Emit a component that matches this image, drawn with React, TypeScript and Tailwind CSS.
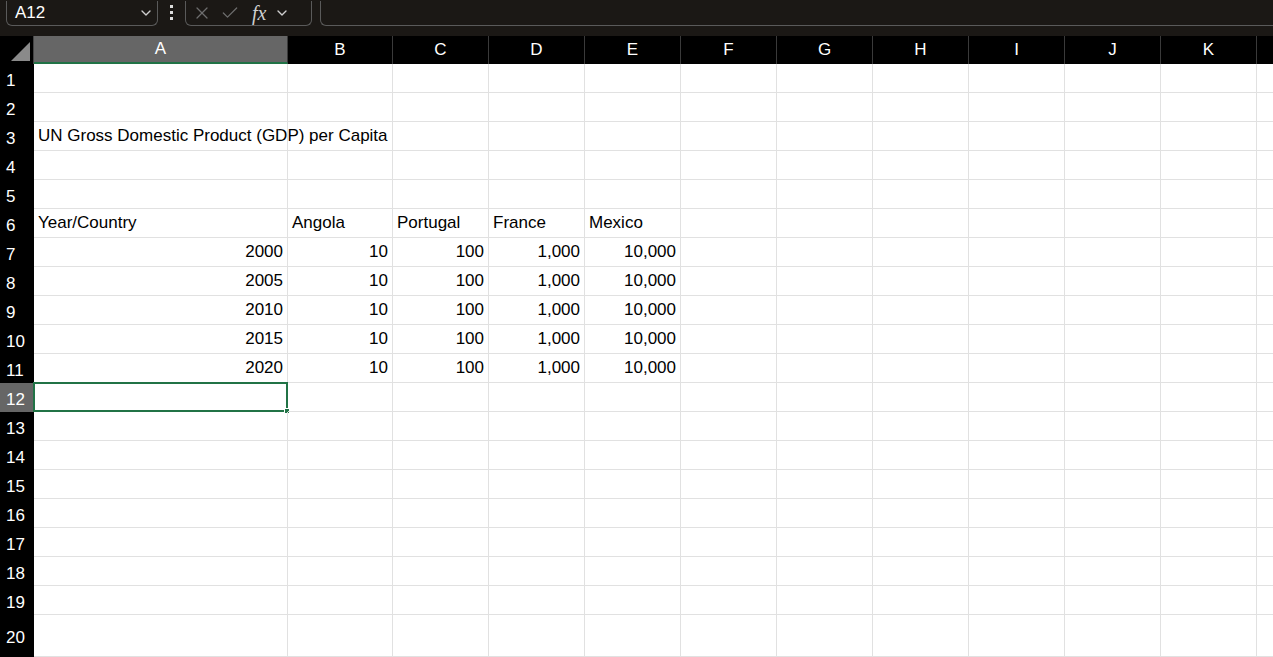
import { ChevronDown, X, Check } from "lucide-react";

const cols = [
  { l: "A", w: 254 },
  { l: "B", w: 105 },
  { l: "C", w: 96 },
  { l: "D", w: 96 },
  { l: "E", w: 96 },
  { l: "F", w: 96 },
  { l: "G", w: 96 },
  { l: "H", w: 96 },
  { l: "I", w: 96 },
  { l: "J", w: 96 },
  { l: "K", w: 96 },
  { l: "", w: 96 },
];

const data: Record<number, string[]> = {
  3: ["UN Gross Domestic Product (GDP) per Capita"],
  6: ["Year/Country", "Angola", "Portugal", "France", "Mexico"],
  7: ["2000", "10", "100", "1,000", "10,000"],
  8: ["2005", "10", "100", "1,000", "10,000"],
  9: ["2010", "10", "100", "1,000", "10,000"],
  10: ["2015", "10", "100", "1,000", "10,000"],
  11: ["2020", "10", "100", "1,000", "10,000"],
};

const App = () => {
  const rows = Array.from({ length: 20 }, (_, i) => i + 1);
  return (
    <div className="h-[657px] w-[1273px] overflow-hidden bg-white" style={{ fontFamily: '"Liberation Sans", Arial, sans-serif' }}>
      {/* formula bar */}
      <div className="flex h-[36px] items-start gap-0 bg-[#1b1815] pt-[1px] text-white">
        <div className="ml-[6px] flex h-[25px] w-[152px] items-center justify-between rounded-b-md border border-[#5a5a5a] border-t-0 pl-[8px] pr-[3px] text-[17px]">
          <span>A12</span>
          <ChevronDown className="h-4 w-4 text-[#cfcfcf]" />
        </div>
        <div className="mx-[12px] flex h-[22px] flex-col items-center justify-center gap-[3px]">
          <div className="h-[3px] w-[3px] bg-[#ddd]" />
          <div className="h-[3px] w-[3px] bg-[#ddd]" />
          <div className="h-[3px] w-[3px] bg-[#ddd]" />
        </div>
        <div className="flex h-[25px] w-[127px] items-center gap-[8px] rounded-b-md border border-[#5a5a5a] border-t-0 pl-[6px] text-[#6d6d6d]">
          <X className="h-5 w-5" strokeWidth={1.5} />
          <Check className="h-5 w-5" strokeWidth={1.5} />
          <span className="ml-[4px] text-[20px] italic text-[#cfcfcf]" style={{ fontFamily: '"Liberation Serif", serif' }}>fx</span>
          <ChevronDown className="h-4 w-4 text-[#cfcfcf]" />
        </div>
        <div className="ml-[8px] h-[25px] flex-1 rounded-bl-md border-b border-l border-[#5a5a5a]" />
      </div>
      {/* column header */}
      <div className="flex h-[28px] bg-black text-[17px] text-white">
        <div className="relative w-[34px] shrink-0 border-r border-[#444]">
          <div className="absolute bottom-[3px] right-[3px] h-0 w-0 border-b-[19px] border-l-[19px] border-b-[#8a8a8a] border-l-transparent" />
        </div>
        {cols.map((c, i) => (
          <div
            key={i}
            style={{ width: c.w }}
            className={`flex shrink-0 items-center justify-center border-r border-[#3a3a3a] ${i === 0 ? "border-b-2 border-b-[#217346] bg-[#666]" : ""}`}
          >
            {c.l}
          </div>
        ))}
      </div>
      {rows.map((r) => (
        <div key={r} className={`flex ${r === 20 ? "h-[42px]" : "h-[29px]"} text-[17px]`}>
          <div className={`flex w-[34px] shrink-0 items-center pl-[6px] pt-[4px] text-white ${r === 12 ? "bg-[#666]" : "bg-black"}`}>
            {r}
          </div>
          {cols.map((c, i) => {
            const v = data[r]?.[i];
            const num = r >= 7 && v !== undefined;
            const sel = r === 12 && i === 0;
            return (
              <div
                key={i}
                style={{ width: c.w }}
                className={`relative flex shrink-0 items-end whitespace-nowrap border-b border-r border-[#e1e1e1] pb-[2px] text-black ${num ? "justify-end pr-[4px]" : "pl-[4px]"}`}
              >
                {v}
                {sel && (
                  <>
                    <div className="pointer-events-none absolute -left-[1px] -top-[1px] h-[30px] w-[255px] border-2 border-[#217346]" />
                    <div className="absolute -bottom-[3px] -right-[3px] h-[6px] w-[6px] border border-white bg-[#217346]" />
                  </>
                )}
              </div>
            );
          })}
        </div>
      ))}
    </div>
  );
};

export default App;
